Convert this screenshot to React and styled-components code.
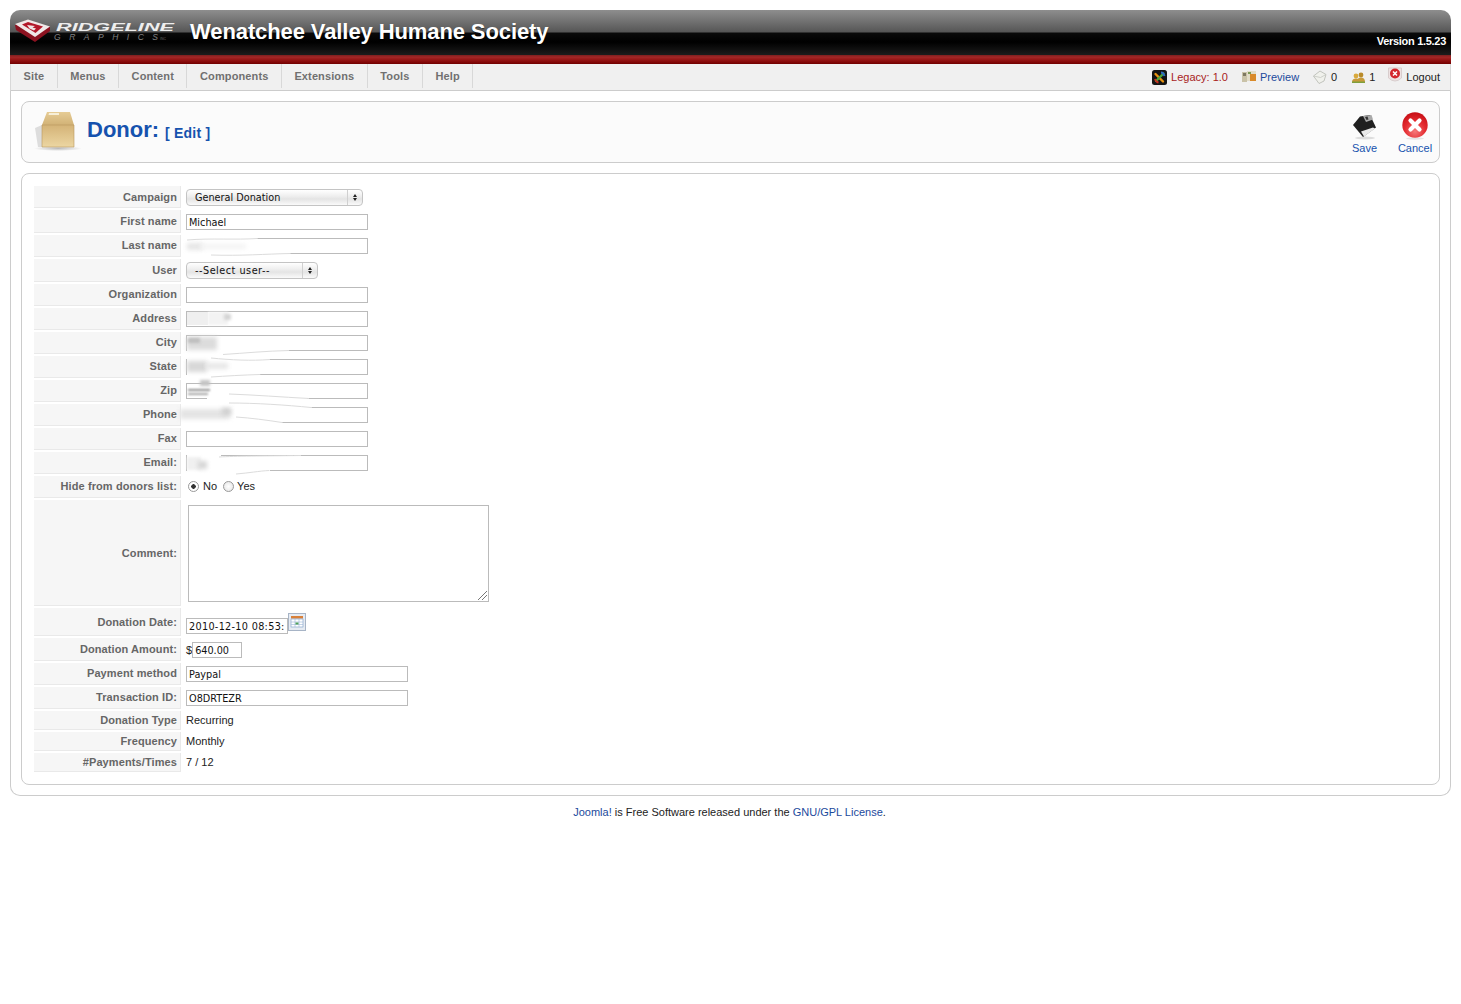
import styled, { createGlobalStyle } from "styled-components";

const GlobalStyle = createGlobalStyle`
  html, body { margin: 0; padding: 0; background: #fff; }
  body { font-family: "Liberation Sans", Arial, sans-serif; font-size: 11px; color: #333; }
  * { box-sizing: border-box; }
`;

const menuItems = ["Site", "Menus", "Content", "Components", "Extensions", "Tools", "Help"];

const rows = [
  { label: "Campaign", h: 22, low: true, kind: "select", value: "General Donation", width: 177, top: 1 },
  { label: "First name", h: 23, low: true, kind: "input", value: "Michael", width: 182, top: 1 },
  { label: "Last name", h: 22, kind: "input", value: "", width: 182 },
  { label: "User", h: 23, low: true, kind: "select", value: "--Select user--", width: 132, track: 0.5 },
  { label: "Organization", h: 22, kind: "input", value: "", width: 182 },
  { label: "Address", h: 22, kind: "input", value: "", width: 182 },
  { label: "City", h: 22, kind: "input", value: "", width: 182 },
  { label: "State", h: 22, kind: "input", value: "", width: 182 },
  { label: "Zip", h: 22, kind: "input", value: "", width: 182 },
  { label: "Phone", h: 22, kind: "input", value: "", width: 182 },
  { label: "Fax", h: 22, kind: "input", value: "", width: 182 },
  { label: "Email:", h: 22, kind: "input", value: "", width: 182 },
];

const tailRows = [
  { label: "Payment method", value: "Paypal" },
  { label: "Transaction ID:", value: "O8DRTEZR" },
];

const staticRows = [
  { label: "Donation Type", value: "Recurring" },
  { label: "Frequency", value: "Monthly" },
  { label: "#Payments/Times", value: "7 / 12" },
];

// blurred patches left by the redaction, [x, y, w, h, colour, blur]
const smudges = {
  "Last name": [[1, 8, 16, 7, "#e6e6e6", 2], [14, 9, 46, 5, "#f3f3f3", 2]],
  Address: [[1, 4, 21, 13, "#efefef", 0.6], [22, 4, 20, 13, "#f3f3f3", 0.8], [38, 6, 7, 6, "#d4d4d4", 1.5]],
  City: [[1, 5, 30, 13, "#dcdcdc", 2], [2, 6, 12, 5, "#bdbdbd", 1.5]],
  State: [[1, 5, 20, 11, "#d8d8d8", 2], [20, 7, 22, 6, "#e6e6e6", 2]],
  Zip: [[2, 9, 22, 2, "#8e8e8e", 0.8], [2, 13, 20, 2, "#a5a5a5", 0.8], [14, 0, 10, 6, "#c4c4c4", 1.5]],
  Phone: [[-6, 5, 50, 10, "#e4e4e4", 2], [36, 4, 9, 7, "#d0d0d0", 2]],
  "Email:": [[1, 5, 14, 13, "#f0f0f0", 1.5], [12, 9, 9, 8, "#d6d6d6", 2]],
};

// white strokes over the fields: what they hide, and the faint edge they leave
const waves = {
  "Last name": {
    mask: "M0 -2 H74 L77 5 L108 14 L110 21 H0 Z",
    lines: ["M6 5 C30 3 55 5 76 3.5", "M30 20 C60 21 85 19 109 18.5"],
  },
  City: {
    mask: "M6 16 H105 L108 21 L42 24 L6 24 Z",
    lines: ["M42 22.5 C65 21 85 19 108 18.5"],
  },
  State: {
    mask: "M6 1 H88 V5 H6 Z M6 15 H78 L80 21 H6 Z",
    lines: ["M30 2 C50 4 70 5 89 3.5", "M30 21 C45 20 62 19 79 18.5"],
  },
  Zip: {
    mask: "M26 15 H124 L128 21 H26 Z",
    lines: ["M48 14 C75 15 100 17 128 18.5"],
  },
  Phone: {
    mask: "M0 -3 H128 L131 5 L100 14 L102 21 H0 Z",
    lines: ["M48 -1 C75 -1 105 1 130 3.5", "M55 13 C70 14 85 16 101 18.5"],
  },
  "Email:": {
    mask: "M6 1 H40 V5 H6 Z M6 15 H88 L90 24 H6 Z",
    lines: ["M38 5 C55 4 80 4 120 3.5", "M55 22 C68 21 78 19 88 18.5"],
  },
};

const Page = styled.div`
  padding: 10px 10px 0;
  width: 1461px;
`;

const Header = styled.header`
  height: 54px;
  border-radius: 10px 10px 0 0;
  overflow: hidden;
  display: flex;
  flex-direction: column;
`;

const HeaderBand = styled.div`
  height: 45px;
  flex: none;
  background: linear-gradient(#8e8e8e 0, #565656 22px, #0a0a0a 23px, #000 32px, #1c1c1c 45px);
  display: flex;
  align-items: flex-start;
`;

const RedStripe = styled.div`
  height: 9px;
  flex: none;
  background: linear-gradient(#7c2020, #a32626 25%, #8c0c0c 70%, #700000);
`;

const Logo = styled.svg`
  width: 165px;
  height: 36px;
  flex: none;
  margin-left: 3px;
`;

const SiteTitle = styled.h1`
  margin: 7px 0 0 12px;
  font-size: 22px;
  line-height: 30px;
  font-weight: 700;
  color: #fff;
  white-space: nowrap;
  letter-spacing: -0.1px;
  text-shadow: 0 1px 1px rgba(0, 0, 0, 0.6);
`;

const Version = styled.div`
  margin-left: auto;
  padding: 24px 5px 0 0;
  color: #fff;
  font-size: 11px;
  font-weight: 700;
  line-height: 14px;
  letter-spacing: -0.3px;
`;

const MenuBar = styled.nav`
  height: 27px;
  display: flex;
  align-items: stretch;
  background: #f0f0f0;
  border: 1px solid #d8d8d8;
  border-top: 0;
  border-bottom: 1px solid #ccc;
`;

const MenuItem = styled.a`
  padding: 0 12.5px;
  font-size: 11px;
  font-weight: 700;
  line-height: 24px;
  color: #707070;
  border-right: 1px solid #d8d8d8;
  margin-bottom: 2px;
  letter-spacing: 0.12px;
`;

const Status = styled.div`
  margin-left: auto;
  display: flex;
  align-items: center;
  padding: 0 10px 0 0;
  font-size: 11px;
  color: #333;
`;

const StatusItem = styled.span`
  display: inline-flex;
  align-items: center;
  gap: 4px;
  margin-left: ${(p) => p.$left || 14}px;
  color: ${(p) => p.$color || "#222"};
  svg { flex: none; }
`;

const Content = styled.main`
  border: 1px solid #ccc;
  border-top: 0;
  border-radius: 0 0 10px 10px;
  height: 705px;
  padding: 10px;
`;

const Toolbar = styled.section`
  height: 62px;
  border: 1px solid #ccc;
  border-radius: 8px;
  background: #fbfbfb;
  display: flex;
  align-items: flex-start;
  padding-left: 11px;
  margin-bottom: 10px;
`;

const BoxIcon = styled.svg`
  width: 48px;
  height: 48px;
  margin-top: 8px;
  flex: none;
`;

const PageTitle = styled.h2`
  margin: 14px 0 0 6px;
  font-size: 22px;
  line-height: 28px;
  font-weight: 700;
  color: #1652ae;
`;

const TitleNote = styled.small`
  font-size: 14px;
  margin-left: 6px;
  letter-spacing: 0.2px;
  vertical-align: -1px;
`;

const Actions = styled.div`
  margin: 0 -1px 0 auto;
  display: flex;
  padding-top: 10px;
`;

const Action = styled.a`
  width: ${(p) => p.$w}px;
  display: flex;
  flex-direction: column;
  align-items: center;
  gap: 2px;
  font-size: 11px;
  line-height: 13px;
  color: #1652ae;
`;

const FormPanel = styled.section`
  height: 612px;
  border: 1px solid #ccc;
  border-radius: 8px;
  padding: 12px;
  display: flex;
  flex-direction: column;
  gap: 2px;
`;

const Row = styled.div`
  height: ${(p) => p.$h}px;
  display: flex;
  align-items: center;
`;

const Label = styled.label`
  width: 147px;
  height: 100%;
  flex: none;
  display: flex;
  align-items: center;
  justify-content: flex-end;
  padding: 0 3px ${(p) => (p.$low ? 0 : 2)}px 0;
  background: #f6f6f6;
  border-bottom: 1px solid #e9e9e9;
  border-right: 1px solid #e9e9e9;
  font-size: 11px;
  font-weight: 700;
  color: #666;
  letter-spacing: 0.1px;
`;

const Field = styled.div`
  flex: 1;
  display: flex;
  align-items: center;
  padding-left: 5px;
  height: 100%;
  font-size: 11px;
  color: #222;
  position: relative;
`;

const TextInput = styled.div`
  width: ${(p) => p.$w}px;
  height: 16px;
  border: 1px solid #bbb;
  background: #fff;
  padding-left: 2px;
  font-family: "DejaVu Sans", "Lucida Grande", sans-serif;
  font-size: 9.7px;
  letter-spacing: ${(p) => p.$track || 0}px;
  line-height: 15px;
  color: #111;
  white-space: nowrap;
  overflow: hidden;
  margin-top: ${(p) => p.$top || 0}px;
`;

const Select = styled.div`
  width: ${(p) => p.$w}px;
  height: 17px;
  border: 1px solid #c4c4c4;
  border-radius: 4px;
  background: linear-gradient(#fff, #efefef 40%, #e4e4e4 60%, #fafafa);
  padding-left: 8px;
  font-family: "DejaVu Sans", "Lucida Grande", sans-serif;
  font-size: 9.7px;
  letter-spacing: ${(p) => p.$track || 0}px;
  line-height: 15px;
  color: #111;
  position: relative;
  margin-top: ${(p) => p.$top || 0}px;
`;

const Stepper = styled.span`
  position: absolute;
  top: 0;
  right: 0;
  bottom: 0;
  width: 15px;
  border-left: 1px solid #d0d0d0;
  display: flex;
  flex-direction: column;
  align-items: center;
  justify-content: center;
  gap: 1px;
  &::before, &::after {
    content: "";
    border-left: 2.5px solid transparent;
    border-right: 2.5px solid transparent;
  }
  &::before { border-bottom: 3px solid #222; }
  &::after { border-top: 3px solid #222; }
`;

const RadioGroup = styled.div`
  display: flex;
  align-items: center;
  margin-bottom: 2px;
`;

const Radio = styled.span`
  width: 11px;
  height: 11px;
  border: 1px solid #999;
  border-radius: 50%;
  background: radial-gradient(${(p) => (p.$on ? "#333 0 2px, #fff 2.5px" : "#fff, #e2e2e2")});
  margin: 0 ${(p) => (p.$on ? 4 : 3)}px 0 ${(p) => p.$left}px;
`;

const TextArea = styled.div`
  width: 301px;
  height: 97px;
  border: 1px solid #bbb;
  background: #fff;
  margin-left: 2px;
  position: relative;
`;

const Grip = styled.svg`
  position: absolute;
  right: 1px;
  bottom: 1px;
  width: 9px;
  height: 9px;
`;

const StaticValue = styled.span`
  margin-bottom: 2px;
`;

const CalButton = styled.svg`
  width: 18px;
  height: 18px;
  flex: none;
`;

const Smudge = styled.span`
  position: absolute;
  left: ${(p) => p.$x}px;
  top: ${(p) => p.$y}px;
  width: ${(p) => p.$w}px;
  height: ${(p) => p.$h}px;
  background: ${(p) => p.$c};
  filter: blur(${(p) => p.$b}px);
`;

const Wave = styled.svg`
  position: absolute;
  left: 0;
  top: -6px;
  width: 200px;
  height: 32px;
`;

const Footer = styled.footer`
  text-align: center;
  margin-top: 9px;
  padding-right: 2px;
  font-size: 11px;
  line-height: 14px;
  color: #222;
  a { color: #1c4a9c; }
`;

const BoxGlyph = () => (
  <BoxIcon viewBox="0 0 48 48">
    <defs>
      <linearGradient id="boxFace" x1="0" y1="0" x2="0" y2="1">
        <stop offset="0" stopColor="#d4b377" />
        <stop offset="1" stopColor="#ecd6a2" />
      </linearGradient>
      <linearGradient id="boxTop" x1="0" y1="0" x2="0" y2="1">
        <stop offset="0" stopColor="#e6cc95" />
        <stop offset="1" stopColor="#d2b276" />
      </linearGradient>
      <radialGradient id="boxShadow">
        <stop offset="0" stopColor="#bbb" />
        <stop offset="1" stopColor="#fbfbfb" />
      </radialGradient>
    </defs>
    <ellipse cx="25" cy="38.5" rx="24" ry="2.5" fill="url(#boxShadow)" />
    <path d="M2 18 L9 15 V37 H5 Z" fill="#ddd" />
    <path d="M14 2 H37 L41 15 H9 Z" fill="url(#boxTop)" />
    <path d="M9 15 H41 V37 H9 Z" fill="url(#boxFace)" stroke="#b8975e" strokeWidth="0.6" />
    <path d="M16 3 H26 V5 H15.5 Z" fill="#f7efd8" />
  </BoxIcon>
);

const SaveGlyph = () => (
  <svg width="26" height="28" viewBox="0 0 26 28">
    <ellipse cx="13" cy="26" rx="10" ry="1.5" fill="#ddd" />
    <path d="M1 13 L8 4.5 L18 3 L24 15.5 L11 25 Z" fill="#1f1f1f" />
    <path d="M11 4 L19.5 3 L21 7.5 L14 10 Z" fill="#a9a9a9" />
    <path d="M13 5 L15.5 4.5 L16.5 7.5 L14.5 8 Z" fill="#333" />
    <path d="M9 19.5 L21 15.5 L23 16.5 L12 24.5 Z" fill="#e9e9e9" />
  </svg>
);

const CancelGlyph = () => (
  <svg width="26" height="28" viewBox="0 0 26 28">
    <defs>
      <radialGradient id="redBall" cx="0.5" cy="0.75" r="0.75">
        <stop offset="0" stopColor="#f57a7a" />
        <stop offset="0.55" stopColor="#e42a2f" />
        <stop offset="1" stopColor="#c60d14" />
      </radialGradient>
    </defs>
    <ellipse cx="13" cy="26.5" rx="9" ry="1.2" fill="#e4e4e4" />
    <circle cx="13" cy="13" r="12.7" fill="url(#redBall)" />
    <path d="M8.5 8.5 L17.5 17.5 M17.5 8.5 L8.5 17.5" stroke="#fff" strokeWidth="4.2" strokeLinecap="round" />
  </svg>
);

const JoomlaGlyph = () => (
  <svg width="15" height="15" viewBox="0 0 15 15">
    <rect width="15" height="15" rx="2.5" fill="#141414" />
    <path d="M3.5 4 L11 11.5" stroke="#e8920f" strokeWidth="2.4" strokeLinecap="round" />
    <path d="M11.5 3.5 L4 11" stroke="#4da33a" strokeWidth="2.4" strokeLinecap="round" />
    <path d="M3 9 Q4 12 6.5 12.5" stroke="#c8301f" strokeWidth="2" fill="none" />
    <path d="M9 2.5 Q11.5 2.5 12.5 6" stroke="#2f6cc0" strokeWidth="2" fill="none" />
  </svg>
);

const PreviewGlyph = () => (
  <svg width="14" height="12" viewBox="0 0 14 12">
    <rect x="0" y="1" width="5" height="10" fill="#c9c2a8" />
    <rect x="1" y="2" width="3" height="3" fill="#7e7862" />
    <rect x="5" y="0" width="9" height="10" fill="#e2dcc8" />
    <rect x="8" y="3" width="6" height="7" fill="#d98a2a" />
    <rect x="6" y="1" width="3" height="2" fill="#7c9a56" />
  </svg>
);

const MailGlyph = () => (
  <svg width="14" height="14" viewBox="0 0 14 14">
    <path d="M0.5 6 L7 1 L13 4.5 L11 11 L6 13.5 Z" fill="#f0f1ec" stroke="#b5b8b0" strokeWidth="0.8" />
    <path d="M0.5 6 L7.5 7.5 L13 4.5" fill="none" stroke="#c4c7c0" strokeWidth="0.8" />
  </svg>
);

const UsersGlyph = () => (
  <svg width="13" height="11" viewBox="0 0 13 11">
    <circle cx="9" cy="3" r="2.4" fill="#b98b2a" />
    <path d="M5 10 Q5 5.5 9 5.5 Q13 5.5 13 10 Z" fill="#c89a3a" />
    <circle cx="4" cy="4" r="2.4" fill="#d9a93c" />
    <path d="M0 10 Q0 6.5 4 6.5 Q8 6.5 8 10 Z" fill="#c89a3a" />
    <rect x="0" y="9.5" width="13" height="1.5" fill="#7f9f3c" />
  </svg>
);

const LogoutIcon = styled.svg`
  width: 14px;
  height: 17px;
  margin-top: -4px;
`;

const LogoutGlyph = () => (
  <LogoutIcon viewBox="0 0 14 17">
    <path d="M0.5 1 H13.5 V11 Q7 17 0.5 11 Z" fill="#eee2e2" stroke="#d8cdcd" />
    <circle cx="7" cy="6.5" r="5" fill="#d3262c" />
    <path d="M5 4.5 L9 8.5 M9 4.5 L5 8.5" stroke="#fff" strokeWidth="1.5" />
  </LogoutIcon>
);

const CalendarGlyph = () => (
  <CalButton viewBox="0 0 18 18">
    <rect x="0.5" y="0.5" width="17" height="17" fill="#e6ebf2" stroke="#a7b4c6" />
    <rect x="3" y="3" width="12" height="2.5" fill="#d8803a" />
    <rect x="3" y="6" width="12" height="8" fill="#fff" stroke="#7a9cc6" strokeWidth="0.6" />
    <path d="M3 9 H15 M3 11.5 H15 M7 6 V14 M11 6 V14" stroke="#9cb6d6" strokeWidth="0.6" />
    <rect x="7.5" y="9.5" width="3" height="2" fill="#4ca05a" />
  </CalButton>
);

const RidgelineLogo = () => (
  <Logo viewBox="0 0 165 36">
    <path d="M2 15 L14 10 L37 17 L37 21 L22 32 L3 20 Z" fill="#8c1220" />
    <path d="M2 14 L15 9.5 L37 16.5 L22 27 Z" fill="#f0e8e8" />
    <path d="M9 14.5 L15 12 L30 16.5 L22.5 23 Z" fill="#b3182a" />
    <path d="M14 15 L22 16 L19.5 17.5 L23 18.5 L21 20.5 L16.5 18.5 Z" fill="#f0e8e8" />
    <text x="43" y="20.5" fontFamily="Liberation Sans" fontSize="11.5" fontWeight="700" fontStyle="italic" fill="#eee" textLength="118" lengthAdjust="spacingAndGlyphs">RIDGELINE</text>
    <text x="41" y="29.5" fontFamily="Liberation Sans" fontSize="8.5" fontStyle="italic" fill="#808080" textLength="104">GRAPHICS</text>
    <text x="147" y="29.5" fontFamily="Liberation Sans" fontSize="3.5" fill="#666">INC</text>
  </Logo>
);

const App = () => (
  <Page>
    <GlobalStyle />
    <Header>
      <HeaderBand>
        <RidgelineLogo />
        <SiteTitle>Wenatchee Valley Humane Society</SiteTitle>
        <Version>Version 1.5.23</Version>
      </HeaderBand>
      <RedStripe />
    </Header>
    <MenuBar>
      {menuItems.map((item) => (
        <MenuItem key={item}>{item}</MenuItem>
      ))}
      <Status>
        <StatusItem $color="#a81c1c"><JoomlaGlyph />Legacy: 1.0</StatusItem>
        <StatusItem $color="#1c4a9c"><PreviewGlyph />Preview</StatusItem>
        <StatusItem><MailGlyph />0</StatusItem>
        <StatusItem $left={15}><UsersGlyph />1</StatusItem>
        <StatusItem $left={13}><LogoutGlyph />Logout</StatusItem>
      </Status>
    </MenuBar>
    <Content>
      <Toolbar>
        <BoxGlyph />
        <PageTitle>
          Donor:<TitleNote>[ Edit ]</TitleNote>
        </PageTitle>
        <Actions>
          <Action $w={51}><SaveGlyph />Save</Action>
          <Action $w={50}><CancelGlyph />Cancel</Action>
        </Actions>
      </Toolbar>
      <FormPanel>
        {rows.map((row) => (
          <Row key={row.label} $h={row.h}>
            <Label $low={row.low}>{row.label}</Label>
            <Field>
              {row.kind === "select" ? (
                <Select $w={row.width} $top={row.top} $track={row.track}>
                  {row.value}
                  <Stepper />
                </Select>
              ) : (
                <TextInput $w={row.width} $top={row.top}>{row.value}</TextInput>
              )}
              {waves[row.label] && (
                <Wave viewBox="0 -6 200 32">
                  <path d={waves[row.label].mask} fill="#fff" />
                  {waves[row.label].lines.map((d) => (
                    <path key={d} d={d} fill="none" stroke="#dcdcdc" />
                  ))}
                </Wave>
              )}
              {(smudges[row.label] || []).map(([x, y, w, h, c, b]) => (
                <Smudge key={`${x}-${y}`} $x={x + 5} $y={y} $w={w} $h={h} $c={c} $b={b} />
              ))}
            </Field>
          </Row>
        ))}
        <Row $h={22}>
          <Label>Hide from donors list:</Label>
          <Field>
            <RadioGroup>
              <Radio $on $left={2} />No<Radio $left={6} />Yes
            </RadioGroup>
          </Field>
        </Row>
        <Row $h={106}>
          <Label $low>Comment:</Label>
          <Field>
            <TextArea>
              <Grip viewBox="0 0 9 9">
                <path d="M0 9 L9 0 M4 9 L9 4" stroke="#777" />
              </Grip>
            </TextArea>
          </Field>
        </Row>
        <Row $h={28}>
          <Label $low>Donation Date:</Label>
          <Field>
            <TextInput $w={102} $top={8} $track={0.3}>2010-12-10 08:53:</TextInput>
            <CalendarGlyph />
          </Field>
        </Row>
        <Row $h={23}>
          <Label $low>Donation Amount:</Label>
          <Field>
            $<TextInput $w={50} $top={1}>640.00</TextInput>
          </Field>
        </Row>
        {tailRows.map((row) => (
          <Row key={row.label} $h={22}>
            <Label>{row.label}</Label>
            <Field>
              <TextInput $w={222}>{row.value}</TextInput>
            </Field>
          </Row>
        ))}
        {staticRows.map((row) => (
          <Row key={row.label} $h={19}>
            <Label $low>{row.label}</Label>
            <Field><StaticValue>{row.value}</StaticValue></Field>
          </Row>
        ))}
      </FormPanel>
    </Content>
    <Footer>
      <a>Joomla!</a> is Free Software released under the <a>GNU/GPL License</a>.
    </Footer>
  </Page>
);

export default App;
